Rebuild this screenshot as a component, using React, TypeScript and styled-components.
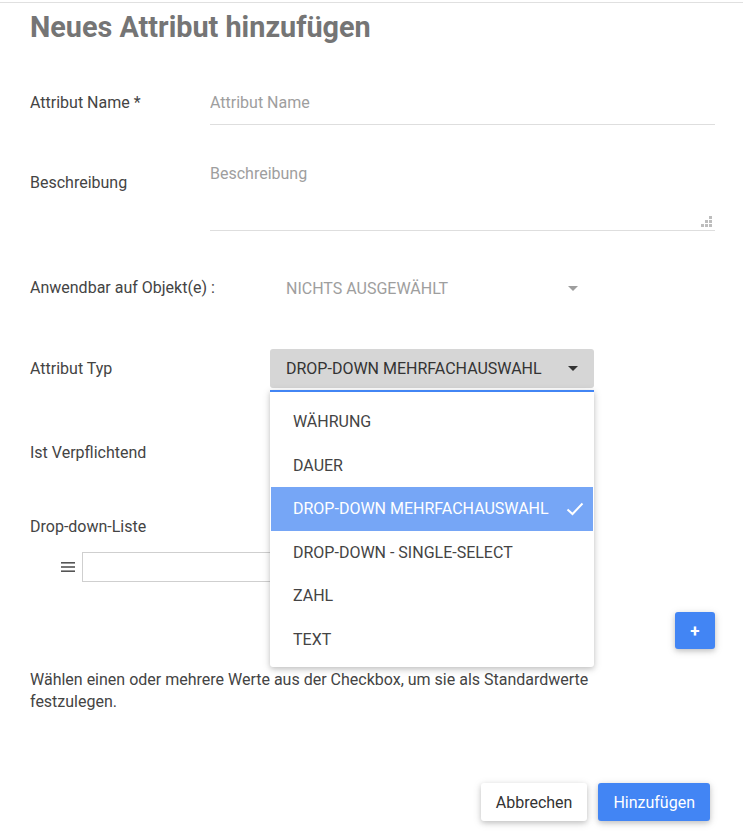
import React from 'react';
import styled, { createGlobalStyle } from 'styled-components';

const GlobalStyle = createGlobalStyle`
  body {
    margin: 0;
    background: #ffffff;
    font-family: Roboto, "Liberation Sans", Arial, sans-serif;
  }
`;

const Page = styled.div`
  width: 743px;
  min-height: 839px;
  box-sizing: border-box;
  border-top: 1px solid #e0e0e0;
  margin-top: 2px;
  padding: 0 28px 0 30px;
`;

const Title = styled.h1`
  margin: 0;
  padding-top: 4px;
  font-size: 28.8px;
  line-height: 40px;
  font-weight: 700;
  color: #757575;
`;

const Form = styled.div`
  display: flex;
  flex-direction: column;
`;

const Row = styled.div<{ $top: number; $align?: string }>`
  display: flex;
  align-items: ${(p) => p.$align || 'center'};
  margin-top: ${(p) => p.$top}px;
`;

const Label = styled.div<{ $width: number; $offset?: number }>`
  flex: 0 0 ${(p) => p.$width}px;
  font-size: 16px;
  line-height: 24px;
  color: #444;
  padding-top: ${(p) => p.$offset || 0}px;
`;

const TextInput = styled.input`
  flex: 1;
  height: 44px;
  box-sizing: border-box;
  border: none;
  border-bottom: 1px solid #dedede;
  font-family: inherit;
  font-size: 16px;
  color: #333;
  padding: 0;
  outline: none;
  &::placeholder {
    color: #9e9e9e;
  }
`;

const AreaWrap = styled.div`
  position: relative;
  flex: 1;
  display: flex;
`;

const TextArea = styled.textarea`
  flex: 1;
  height: 76px;
  box-sizing: border-box;
  border: none;
  border-bottom: 1px solid #dedede;
  font-family: inherit;
  font-size: 16px;
  line-height: 24px;
  color: #333;
  padding: 7px 0 0;
  outline: none;
  resize: none;
  &::placeholder {
    color: #9e9e9e;
  }
`;

const Grip = styled.svg`
  position: absolute;
  right: 3px;
  bottom: 4px;
  width: 11px;
  height: 11px;
`;

const SelectWrap = styled.div`
  position: relative;
  width: 324px;
`;

const SelectBox = styled.div<{ $active?: boolean }>`
  height: ${(p) => (p.$active ? 39 : 40)}px;
  box-sizing: border-box;
  display: flex;
  align-items: center;
  justify-content: space-between;
  padding: 0 16px;
  border-radius: 3px;
  background: ${(p) => (p.$active ? '#d6d6d6' : 'transparent')};
  color: ${(p) => (p.$active ? '#333' : '#9e9e9e')};
  font-size: 16px;
  text-transform: uppercase;
`;

const Caret = styled.span<{ $dark?: boolean }>`
  width: 0;
  height: 0;
  border-left: 5px solid transparent;
  border-right: 5px solid transparent;
  border-top: 5px solid ${(p) => (p.$dark ? '#333' : '#9e9e9e')};
`;

const Menu = styled.ul`
  position: absolute;
  top: 41px;
  left: 0;
  width: 100%;
  margin: 0;
  padding: 8px 0 6px;
  list-style: none;
  background: #fff;
  border-top: 2px solid #4285f4;
  border-radius: 0 0 3px 3px;
  box-shadow: 0 2px 5px rgba(0, 0, 0, 0.16), 0 2px 10px rgba(0, 0, 0, 0.12);
  z-index: 10;
`;

const MenuItem = styled.li<{ $selected?: boolean }>`
  height: 43.5px;
  display: flex;
  align-items: center;
  justify-content: space-between;
  padding: 0 9px 0 22px;
  margin: 0 1px;
  font-size: 16px;
  color: ${(p) => (p.$selected ? '#fff' : '#444')};
  background: ${(p) => (p.$selected ? '#76a6f6' : 'transparent')};
  text-transform: uppercase;
`;

const ListRow = styled.div`
  display: flex;
  align-items: center;
  gap: 7px;
  margin-top: 13px;
  padding-left: 31px;
`;

const DragIcon = styled.svg`
  width: 14px;
  height: 12px;
`;

const ListInput = styled.input`
  width: 420px;
  height: 30px;
  box-sizing: border-box;
  border: 1px solid #cfcfcf;
  outline: none;
  font-family: inherit;
  font-size: 16px;
`;

const AddRow = styled.div`
  display: flex;
  justify-content: flex-end;
  margin-top: 30px;
`;

const AddButton = styled.button`
  width: 40px;
  height: 37px;
  border: none;
  border-radius: 3px;
  background: #4285f4;
  color: #fff;
  font-size: 17px;
  font-weight: 700;
  font-family: inherit;
  box-shadow: 0 2px 5px rgba(0, 0, 0, 0.16), 0 2px 10px rgba(0, 0, 0, 0.12);
  cursor: pointer;
`;

const Hint = styled.p`
  margin: 20px 0 0;
  max-width: 610px;
  font-size: 16px;
  line-height: 22px;
  color: #444;
`;

const Footer = styled.div`
  display: flex;
  justify-content: flex-end;
  gap: 11px;
  margin-top: 70px;
  padding-right: 5px;
`;

const FooterButton = styled.button<{ $primary?: boolean }>`
  height: 38px;
  padding: 0 15px;
  border: none;
  border-radius: 3px;
  font-family: inherit;
  font-size: 16px;
  background: ${(p) => (p.$primary ? '#4285f4' : '#fff')};
  color: ${(p) => (p.$primary ? '#fff' : '#333')};
  box-shadow: 0 2px 5px rgba(0, 0, 0, 0.16), 0 2px 10px rgba(0, 0, 0, 0.12);
  cursor: pointer;
`;

const types = [
  'Währung',
  'Dauer',
  'Drop-down Mehrfachauswahl',
  'Drop-down - Single-Select',
  'Zahl',
  'Text',
];

const Check = () => (
  <svg width="18" height="14" viewBox="0 0 18 14">
    <path d="M1.5 7.5 L6.5 12 L16.5 1.5" fill="none" stroke="#fff" strokeWidth="2" />
  </svg>
);

export default function App() {
  const selected = 'Drop-down Mehrfachauswahl';
  return (
    <>
      <GlobalStyle />
      <Page>
        <Title>Neues Attribut hinzufügen</Title>
        <Form>
          <Row $top={34}>
            <Label $width={180}>Attribut Name *</Label>
            <TextInput placeholder="Attribut Name" />
          </Row>
          <Row $top={30} $align="flex-start">
            <Label $width={180} $offset={16}>Beschreibung</Label>
            <AreaWrap>
              <TextArea placeholder="Beschreibung" />
              <Grip viewBox="0 0 11 11">
                <rect x="8" y="0" width="3" height="3" fill="#bdbdbd" />
                <rect x="4" y="4" width="3" height="3" fill="#bdbdbd" />
                <rect x="8" y="4" width="3" height="3" fill="#bdbdbd" />
                <rect x="0" y="8" width="3" height="3" fill="#bdbdbd" />
                <rect x="4" y="8" width="3" height="3" fill="#bdbdbd" />
                <rect x="8" y="8" width="3" height="3" fill="#bdbdbd" />
              </Grip>
            </AreaWrap>
          </Row>
          <Row $top={37}>
            <Label $width={240}>Anwendbar auf Objekt(e) :</Label>
            <SelectWrap>
              <SelectBox>
                Nichts ausgewählt
                <Caret />
              </SelectBox>
            </SelectWrap>
          </Row>
          <Row $top={41}>
            <Label $width={240}>Attribut Typ</Label>
            <SelectWrap>
              <SelectBox $active>
                {selected}
                <Caret $dark />
              </SelectBox>
              <Menu>
                {types.map((t) => (
                  <MenuItem key={t} $selected={t === selected}>
                    {t}
                    {t === selected && <Check />}
                  </MenuItem>
                ))}
              </Menu>
            </SelectWrap>
          </Row>
          <Row $top={53}>
            <Label $width={240}>Ist Verpflichtend</Label>
          </Row>
          <Row $top={50}>
            <Label $width={240}>Drop-down-Liste</Label>
          </Row>
          <ListRow>
            <DragIcon viewBox="0 0 14 12">
              <rect x="0" y="1" width="14" height="1.6" fill="#555" />
              <rect x="0" y="5.2" width="14" height="1.6" fill="#555" />
              <rect x="0" y="9.4" width="14" height="1.6" fill="#555" />
            </DragIcon>
            <ListInput />
          </ListRow>
          <AddRow>
            <AddButton>+</AddButton>
          </AddRow>
          <Hint>
            Wählen einen oder mehrere Werte aus der Checkbox, um sie als Standardwerte festzulegen.
          </Hint>
          <Footer>
            <FooterButton>Abbrechen</FooterButton>
            <FooterButton $primary>Hinzufügen</FooterButton>
          </Footer>
        </Form>
      </Page>
    </>
  );
}
